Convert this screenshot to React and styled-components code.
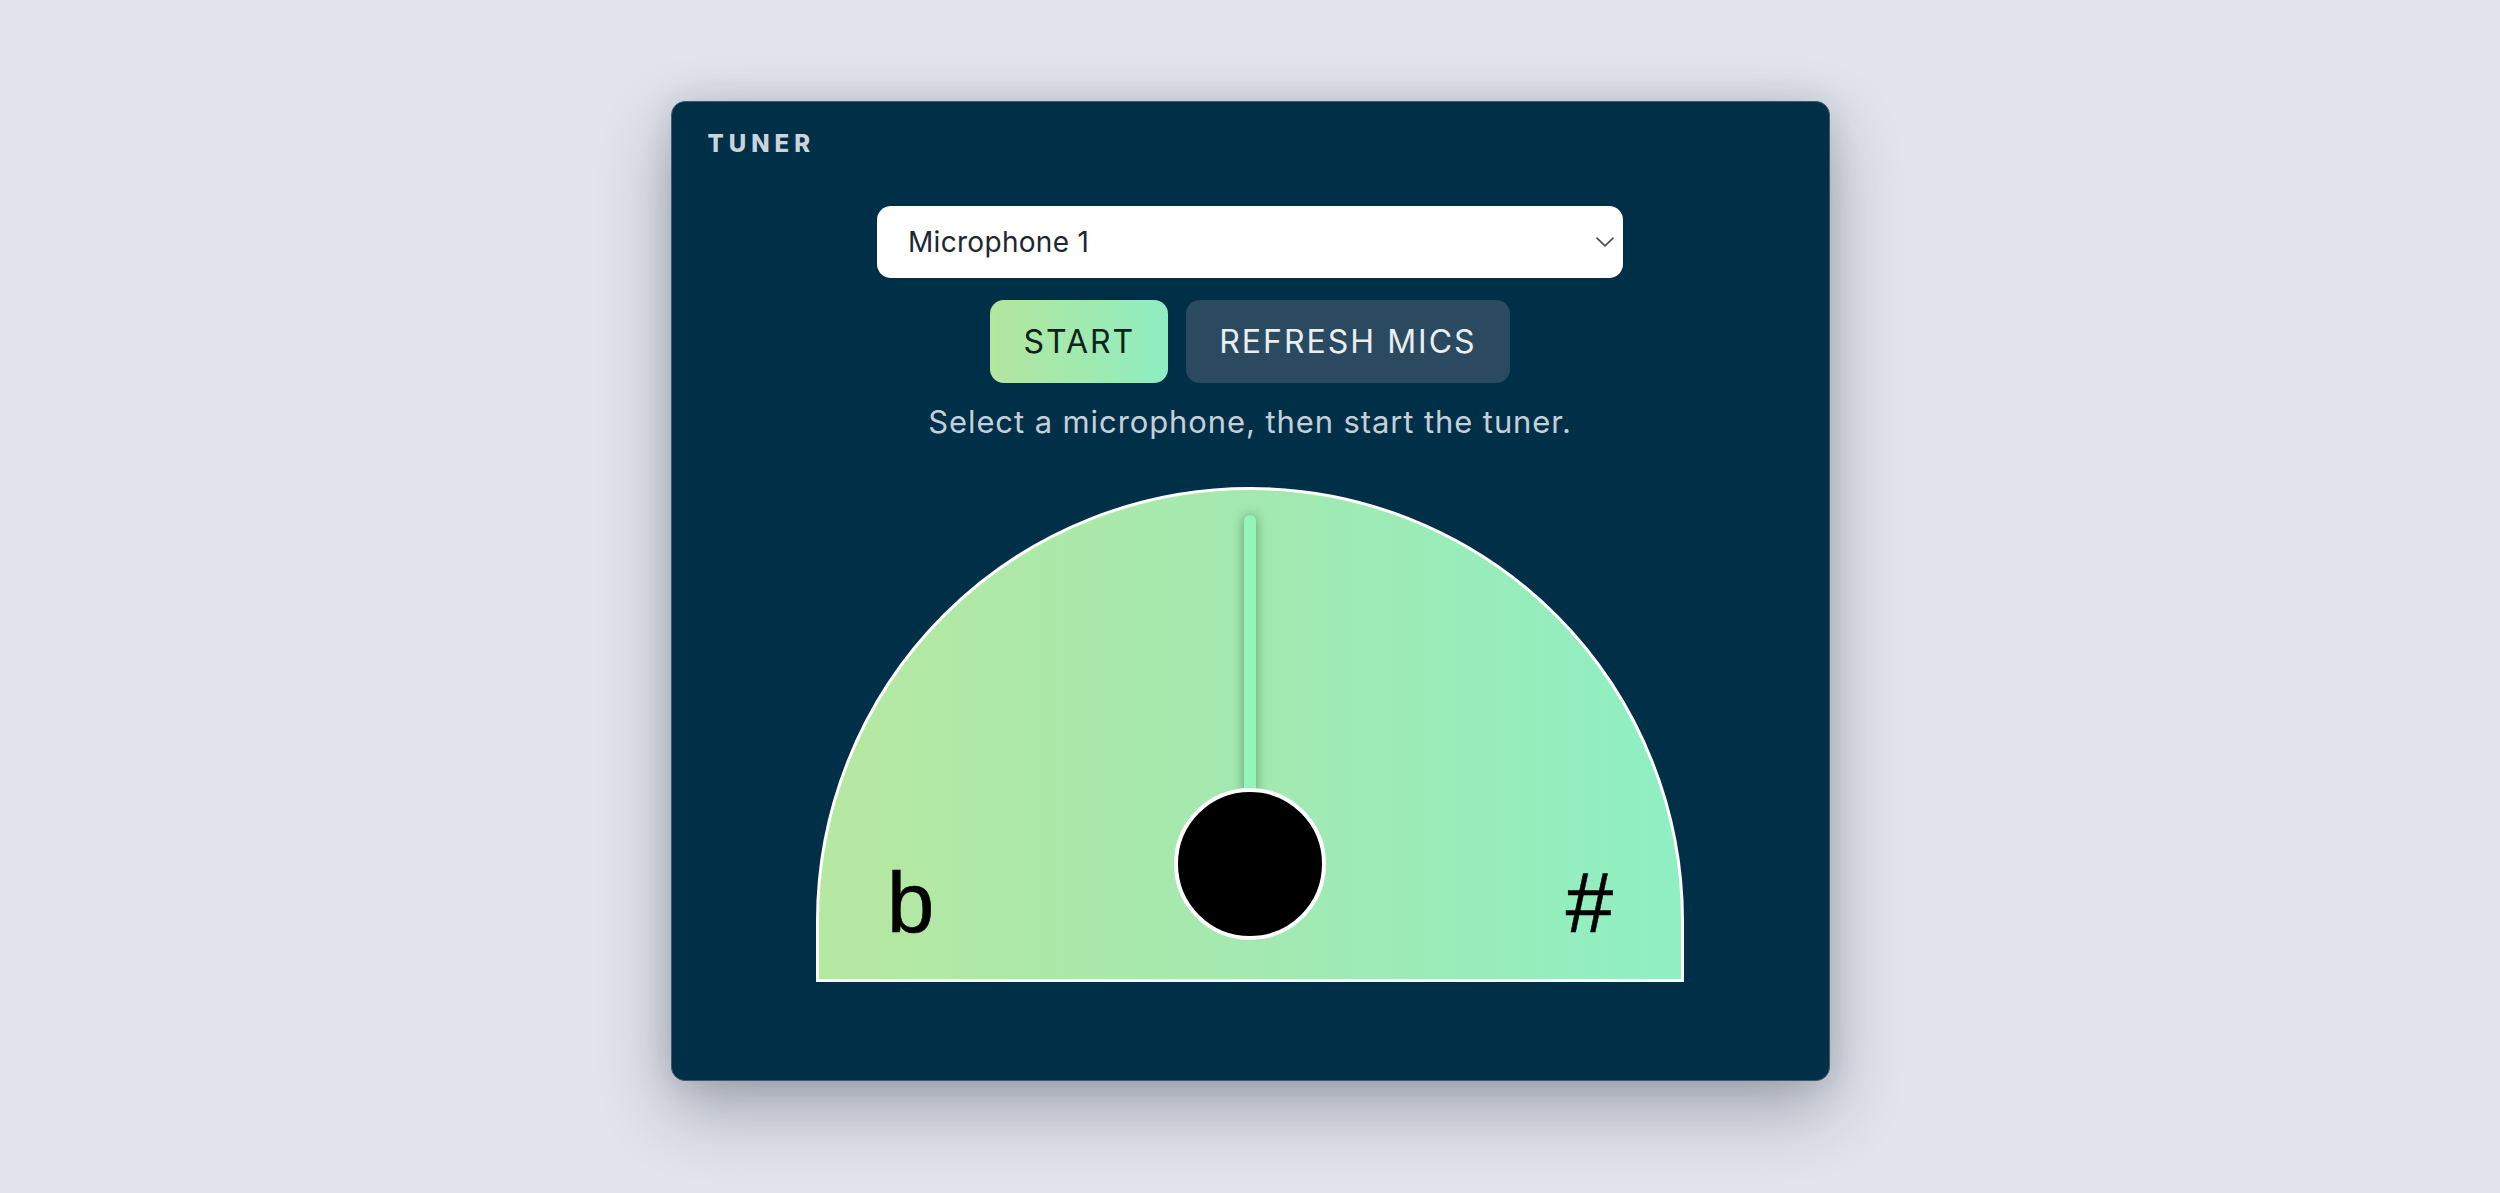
import React from "react";
import styled, { createGlobalStyle } from "styled-components";

const GlobalStyle = createGlobalStyle`
  *, *::before, *::after { box-sizing: border-box; }
  html, body { margin: 0; padding: 0; }
  body {
    background: #e1e4ec;
    font-family: Inter, "Noto Sans", "Liberation Sans", sans-serif;
  }
`;

const Page = styled.main`
  min-height: 100vh;
  display: flex;
  justify-content: center;
  align-items: center;
  padding-bottom: 12px;
`;

const Panel = styled.section`
  width: 1159px;
  display: flex;
  flex-direction: column;
  align-items: center;
  padding: 30px 36px 98px;
  background: #002f48;
  border: 1px solid #3d5a6e;
  border-radius: 14px;
  box-shadow: 0 28px 70px rgba(25, 30, 50, 0.32), 0 0 30px rgba(25, 30, 50, 0.12);
`;

const Title = styled.h1`
  align-self: flex-start;
  margin: 0;
  font-family: Inter, "Noto Sans", sans-serif;
  font-size: 24px;
  line-height: 24px;
  font-weight: 800;
  letter-spacing: 5px;
  color: #c9d4dd;
`;

const SelectWrap = styled.div`
  position: relative;
  width: 746px;
  height: 72px;
  margin-top: 50px;
`;

const MicSelect = styled.select`
  appearance: none;
  -webkit-appearance: none;
  width: 100%;
  height: 100%;
  border: none;
  border-radius: 14px;
  background: #ffffff;
  padding: 0 60px 0 31px;
  font-family: Inter, "Noto Sans", sans-serif;
  font-size: 28px;
  letter-spacing: 0.3px;
  color: #1d2631;
  outline: none;
`;

const Chevron = styled.svg`
  position: absolute;
  right: 9px;
  top: 50%;
  width: 18px;
  height: 10px;
  transform: translateY(-50%);
  pointer-events: none;
`;

const ButtonRow = styled.div`
  display: flex;
  gap: 18px;
  margin-top: 22px;
`;

const Button = styled.button`
  height: 83px;
  padding: 0 33px;
  border: none;
  border-radius: 14px;
  font-family: Inter, "Noto Sans", sans-serif;
  font-size: 32px;
  font-weight: 400;
  letter-spacing: 2px;
  cursor: pointer;
  background: ${(p) =>
    p.$primary ? "linear-gradient(90deg, #b4e69e 0%, #8eedc1 100%)" : "#2b4a60"};
  color: ${(p) => (p.$primary ? "#0c2419" : "#e8eef2")};
`;

const Hint = styled.p`
  margin: 21px 0 0;
  font-size: 31px;
  line-height: 36px;
  color: #c3cfda;
  letter-spacing: 0.9px;
`;

const Gauge = styled.div`
  position: relative;
  width: 868px;
  height: 495px;
  margin-top: 47px;
  border: 3px solid #ffffff;
  border-radius: 434px 434px 0 0;
  background: linear-gradient(90deg, #b6e8a1 0%, #a3e9b0 50%, #8fefc3 100%);
  display: flex;
  justify-content: space-between;
  align-items: flex-end;
  padding: 0 68px 34px;
`;

const Accidental = styled.span`
  font-family: "Liberation Sans", Arial, sans-serif;
  font-size: 85px;
  line-height: 1;
  color: #000000;
  -webkit-text-stroke: 0.6px #000000;
`;

const Needle = styled.div`
  position: absolute;
  left: 50%;
  top: 25px;
  width: 12px;
  height: 349px;
  margin-left: -6px;
  border-radius: 6px;
  background: #93f6b8;
  box-shadow: 0 0 12px rgba(10, 60, 35, 0.45);
  transform-origin: 50% 100%;
  transform: rotate(${(p) => p.$angle}deg);
`;

const Hub = styled.div`
  position: absolute;
  left: 50%;
  top: 298px;
  width: 152px;
  height: 152px;
  margin-left: -76px;
  border-radius: 50%;
  background: #000000;
  border: 4px solid #ffffff;
`;

export default function App() {
  return (
    <>
      <GlobalStyle />
      <Page>
        <Panel>
          <Title>TUNER</Title>
          <SelectWrap>
            <MicSelect defaultValue="mic1">
              <option value="mic1">Microphone 1</option>
            </MicSelect>
            <Chevron viewBox="0 0 18 10" fill="none">
              <path d="M1 1.2 L9 8.8 L17 1.2" stroke="#4a4f57" strokeWidth="1.7" strokeLinecap="round" strokeLinejoin="round" />
            </Chevron>
          </SelectWrap>
          <ButtonRow>
            <Button $primary>START</Button>
            <Button>REFRESH MICS</Button>
          </ButtonRow>
          <Hint>Select a microphone, then start the tuner.</Hint>
          <Gauge>
            <Accidental>b</Accidental>
            <Needle $angle={0} />
            <Hub />
            <Accidental>#</Accidental>
          </Gauge>
        </Panel>
      </Page>
    </>
  );
}
